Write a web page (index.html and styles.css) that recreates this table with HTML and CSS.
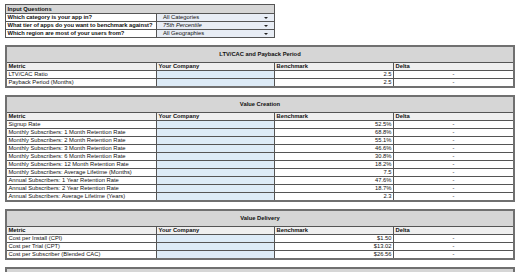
FILE: index.html
```html
<!DOCTYPE html>
<html lang="en">
<head>
<meta charset="utf-8">
<title>Subscription App Benchmarks</title>
<link rel="stylesheet" href="styles.css">
</head>
<body>
<main class="sheet">
  <div class="inputs">
    <div class="irow ihead"><div class="hcell">Input Questions</div></div>
    <div class="irow"><div class="q">Which category is your app in?</div><div class="sel"><span>All Categories</span><i class="caret"></i></div></div>
    <div class="irow"><div class="q">What tier of apps do you want to benchmark against?</div><div class="sel"><span class="it">75th Percentile</span><i class="caret"></i></div></div>
    <div class="irow"><div class="q">Which region are most of your users from?</div><div class="sel"><span>All Geographies</span><i class="caret"></i></div></div>
  </div>

  <section class="tbl">
    <div class="title">LTV/CAC and Payback Period</div>
    <div class="row head"><div>Metric</div><div>Your Company</div><div>Benchmark</div><div>Delta</div></div>
    <div class="row"><div>LTV/CAC Ratio</div><div class="yc"></div><div class="bm">2.5</div><div class="d">-</div></div>
    <div class="row"><div>Payback Period (Months)</div><div class="yc"></div><div class="bm">2.5</div><div class="d">-</div></div>
  </section>

  <section class="tbl">
    <div class="title">Value Creation</div>
    <div class="row head"><div>Metric</div><div>Your Company</div><div>Benchmark</div><div>Delta</div></div>
    <div class="row"><div>Signup Rate</div><div class="yc"></div><div class="bm">52.5%</div><div class="d">-</div></div>
    <div class="row"><div>Monthly Subscribers: 1 Month Retention Rate</div><div class="yc"></div><div class="bm">68.8%</div><div class="d">-</div></div>
    <div class="row"><div>Monthly Subscribers: 2 Month Retention Rate</div><div class="yc"></div><div class="bm">55.1%</div><div class="d">-</div></div>
    <div class="row"><div>Monthly Subscribers: 3 Month Retention Rate</div><div class="yc"></div><div class="bm">46.6%</div><div class="d">-</div></div>
    <div class="row"><div>Monthly Subscribers: 6 Month Retention Rate</div><div class="yc"></div><div class="bm">30.8%</div><div class="d">-</div></div>
    <div class="row"><div>Monthly Subscribers: 12 Month Retention Rate</div><div class="yc"></div><div class="bm">18.2%</div><div class="d">-</div></div>
    <div class="row"><div>Monthly Subscribers: Average Lifetime (Months)</div><div class="yc"></div><div class="bm">7.5</div><div class="d">-</div></div>
    <div class="row"><div>Annual Subscribers: 1 Year Retention Rate</div><div class="yc"></div><div class="bm">47.6%</div><div class="d">-</div></div>
    <div class="row"><div>Annual Subscribers: 2 Year Retention Rate</div><div class="yc"></div><div class="bm">18.7%</div><div class="d">-</div></div>
    <div class="row"><div>Annual Subscribers: Average Lifetime (Years)</div><div class="yc"></div><div class="bm">2.3</div><div class="d">-</div></div>
  </section>

  <section class="tbl">
    <div class="title">Value Delivery</div>
    <div class="row head"><div>Metric</div><div>Your Company</div><div>Benchmark</div><div>Delta</div></div>
    <div class="row"><div>Cost per Install (CPI)</div><div class="yc"></div><div class="bm">$1.50</div><div class="d">-</div></div>
    <div class="row"><div>Cost per Trial (CPT)</div><div class="yc"></div><div class="bm">$13.02</div><div class="d">-</div></div>
    <div class="row"><div>Cost per Subscriber (Blended CAC)</div><div class="yc"></div><div class="bm">$26.56</div><div class="d">-</div></div>
  </section>

  <section class="tbl">
    <div class="title"></div>
  </section>
</main>
</body>
</html>
```

FILE: styles.css
```css
html, body {
  margin: 0;
  background: #ffffff;
  overflow: hidden;
}

body {
  font-family: "Liberation Sans", Arial, sans-serif;
  font-size: 5.8px;
  color: #111111;
}

.sheet {
  padding: 4px 0 0 5px;
}

/* Input questions block */
.inputs {
  width: 268px;
  border: 1px solid #555555;
}

.irow {
  display: grid;
  grid-template-columns: 151px 117px;
  height: 8px;
  box-sizing: border-box;
  border-bottom: 1px solid #555555;
}

.irow:last-child {
  border-bottom: 0;
  height: 7px;
}

.ihead {
  grid-template-columns: 1fr;
  height: 9px;
  background: #d6d6d6;
}

.irow > div {
  line-height: 7px;
  white-space: nowrap;
  overflow: hidden;
}

.hcell {
  font-weight: bold;
  padding-left: 1.5px;
  line-height: 8px !important;
}

.q {
  font-weight: bold;
  padding-left: 1.5px;
  letter-spacing: -0.05px;
  border-right: 1px solid #555555;
}

.sel {
  display: flex;
  align-items: center;
  justify-content: space-between;
  padding: 0 6px;
  background: #e8edf5;
}

.it {
  font-style: italic;
}

.caret {
  width: 0;
  height: 0;
  border-left: 2px solid transparent;
  border-right: 2px solid transparent;
  border-top: 2px solid #222222;
}

/* Metric tables */
.tbl {
  width: 506px;
  margin-top: 7px;
  border: 2px solid #707070;
}

.title {
  height: 16px;
  box-sizing: border-box;
  border-bottom: 1px solid #555555;
  background: #d6d6d6;
  font-weight: bold;
  text-align: center;
  line-height: 15px;
}

.tbl .title:last-child {
  border-bottom: 0;
}

.row {
  display: grid;
  grid-template-columns: 150px 118px 119px 119px;
  height: 8px;
  box-sizing: border-box;
  border-bottom: 1px solid #555555;
}

.row:last-child {
  border-bottom: 0;
  height: 7px;
}

.row > div {
  border-right: 1px solid #555555;
  line-height: 7px;
  padding: 0 1.5px;
  white-space: nowrap;
  overflow: hidden;
}

.row > div:last-child {
  border-right: 0;
}

.head {
  background: #efefef;
  font-weight: bold;
}

.yc {
  background: #ddebf7;
}

.bm {
  text-align: right;
}

.d {
  text-align: center;
}
```
